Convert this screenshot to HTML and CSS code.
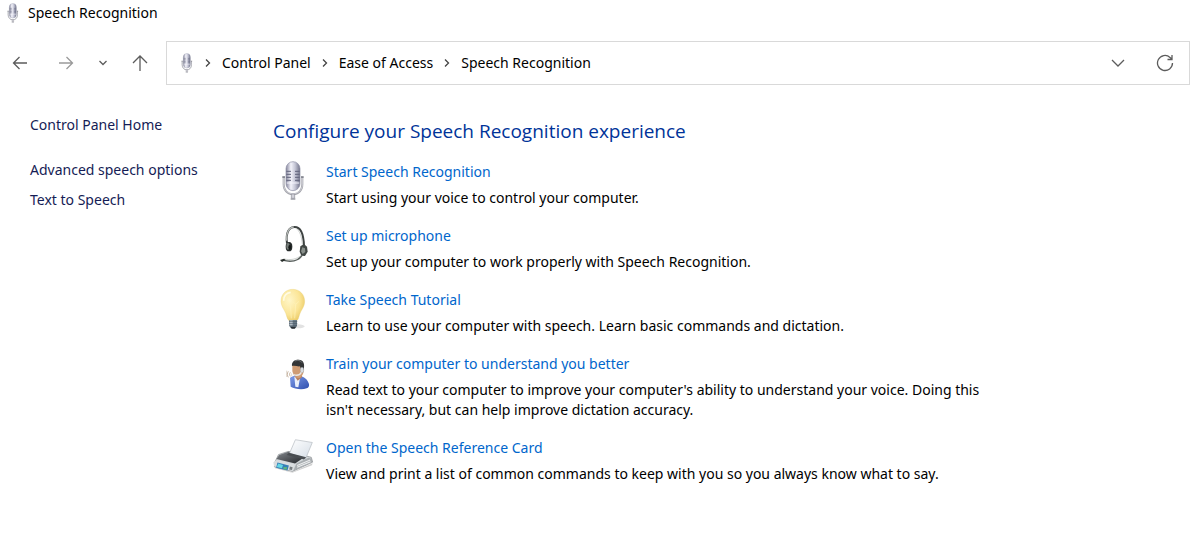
FILE: index.html
```
<!DOCTYPE html>
<html lang="en">
<head>
   <meta charset="UTF-8">
   <title>Speech Recognition</title>
   <link rel="stylesheet" href="styles.css">
</head>

<body>

<!-- shared icon shapes -->
<svg class="defs" width="0" height="0" aria-hidden="true">
   <defs>
      <linearGradient id="metal" x1="0" x2="1" y1="0" y2="0">
         <stop offset="0" stop-color="#85859c"/>
         <stop offset=".35" stop-color="#f4f4fb"/>
         <stop offset=".65" stop-color="#c5c6d6"/>
         <stop offset="1" stop-color="#717389"/>
      </linearGradient>
      <radialGradient id="glow" cx=".35" cy=".35" r=".75">
         <stop offset="0" stop-color="#fff6c9"/>
         <stop offset=".6" stop-color="#fbe596"/>
         <stop offset="1" stop-color="#e9c760"/>
      </radialGradient>
      <linearGradient id="paper" x1="0" x2="1" y1="0" y2="1">
         <stop offset="0" stop-color="#fff"/>
         <stop offset="1" stop-color="#d5dde6"/>
      </linearGradient>
      <linearGradient id="tray" x1="0" x2="1" y1="0" y2="1">
         <stop offset="0" stop-color="#85898e"/>
         <stop offset="1" stop-color="#202327"/>
      </linearGradient>
      <linearGradient id="shirt" x1="0" x2="1" y1="0" y2="1">
         <stop offset="0" stop-color="#7d9be8"/>
         <stop offset="1" stop-color="#2f4fae"/>
      </linearGradient>
   </defs>
   <symbol id="mic" viewBox="34 17 72 120">
      <path d="M41 66v22c0 18 12 30 28 30s28-12 28-30V66" fill="none" stroke="#a2a3aa" stroke-width="6"/>
      <path d="M41 68v20c0 17 12 28 28 28s28-11 28-28V68" fill="none" stroke="#e2e2e8" stroke-width="2"/>
      <path d="M37 66h8M93 66h8" stroke="#777984" stroke-width="4"/>
      <path d="M64 117h10v13H64z" fill="#d2d2da" stroke="#8b8c96" stroke-width="2"/>
      <path d="M62 132h14" stroke="#9b9ca5" stroke-width="4"/>
      <rect x="48" y="20" width="42" height="87" rx="21" fill="url(#metal)" stroke="#8d8ea4" stroke-width="2"/>
      <path d="M49 49h14M75 49h14M49 58h14M75 58h14M49 67h14M75 67h14M49 76h14M75 76h14" stroke="#62647c" stroke-width="3"/>
      <path d="M50 84h38" stroke="#f7f7ff" stroke-width="3"/>
   </symbol>
</svg>

<header class="titlebar">
   <svg class="icon-mic-small" aria-hidden="true"><use href="#mic"/></svg>
   <span>Speech Recognition</span>
</header>

<nav class="toolbar">
   <div class="nav-buttons">
      <button type="button" class="back" aria-label="Back">
         <svg width="16" height="16" viewBox="0 0 16 16"><path d="M15 8H1.500M7.500 2L1.500 8l6 6"/></svg>
      </button>
      <button type="button" class="dim" aria-label="Forward">
         <svg width="16" height="16" viewBox="0 0 16 16"><path d="M1 8h13.500M8.500 2l6 6-6 6"/></svg>
      </button>
      <button type="button" class="recent" aria-label="Recent locations">
         <svg width="8" height="8" viewBox="0 0 8 8"><path d="M.5 2L4 5.500 7.500 2"/></svg>
      </button>
      <button type="button" aria-label="Up">
         <svg width="16" height="16" viewBox="0 0 16 16"><path d="M8 16V1M1 8l7-7 7 7"/></svg>
      </button>
   </div>

   <div class="address">
      <svg class="icon-mic-small" aria-hidden="true"><use href="#mic"/></svg>
      <svg class="sep" viewBox="0 0 6 8"><path d="M1 .5L4.500 4 1 7.500"/></svg>
      <a href="#">Control Panel</a>
      <svg class="sep" viewBox="0 0 6 8"><path d="M1 .5L4.500 4 1 7.500"/></svg>
      <a href="#">Ease of Access</a>
      <svg class="sep" viewBox="0 0 6 8"><path d="M1 .5L4.500 4 1 7.500"/></svg>
      <a href="#">Speech Recognition</a>
      <div class="address-buttons">
         <button type="button" aria-label="Previous locations">
            <svg width="14" height="8" viewBox="0 0 14 8"><path d="M1 1l6 6 6-6"/></svg>
         </button>
         <button type="button" aria-label="Refresh">
            <svg width="18" height="18" viewBox="0 0 18 18"><path d="M16.500 9A7.500 7.500 0 1 1 14 3.400L15.800 5M16 1v4.500h-4.500"/></svg>
         </button>
      </div>
   </div>
</nav>

<div class="page">
   <aside class="sidebar">
      <a class="home" href="#">Control Panel Home</a>
      <a href="#">Advanced speech options</a>
      <a href="#">Text to Speech</a>
   </aside>

   <main class="content">
      <h1>Configure your Speech Recognition experience</h1>

      <ul class="tasks">
         <li>
            <svg class="icon" viewBox="9 21 120 120" aria-hidden="true"><use href="#mic" x="34" y="17" width="72" height="120"/></svg>
            <div class="task">
               <a href="#">Start Speech Recognition</a>
               <p>Start using your voice to control your computer.</p>
            </div>
         </li>
         <li>
            <svg class="icon" viewBox="9 18 120 120" aria-hidden="true">
               <path d="M51 70C47 39 56 21 74 21c17 0 27 21 28 58" fill="none" stroke="#3e4342" stroke-width="6"/>
               <path d="M50 62C48 39 56 23 71 21" fill="none" stroke="#b9bdbb" stroke-width="4"/>
               <path d="M78 25c11 7 17 24 19 48" fill="none" stroke="#b5b9b7" stroke-width="2"/>
               <ellipse cx="57" cy="80" rx="10" ry="14" fill="#262b2a"/>
               <ellipse cx="54" cy="79" rx="5" ry="10" fill="#747b77"/>
               <ellipse cx="59" cy="82" rx="4" ry="7" fill="#151918"/>
               <path d="M91 79l11-7 9 8 2 15-8 13-11-1-5-12z" fill="#414744"/>
               <path d="M97 82l8 3 1 11-8 6-5-8z" fill="#89908b"/>
               <path d="M96 106c-11 17-34 21-58 14" fill="none" stroke="#59605d" stroke-width="5"/>
               <path d="M92 107c-12 11-31 14-50 10" fill="none" stroke="#b4b9b5" stroke-width="2"/>
               <path d="M30 120l12-4 5 4-11 6z" fill="#292e2b"/>
            </svg>
            <div class="task">
               <a href="#">Set up microphone</a>
               <p>Set up your computer to work properly with Speech Recognition.</p>
            </div>
         </li>
         <li>
            <svg class="icon" viewBox="9 21 120 120" aria-hidden="true">
               <ellipse cx="84" cy="130" rx="20" ry="6" fill="#e2e2e2"/>
               <path d="M68 19c-21 0-35 15-35 36 0 15 9 23 14 35 3 8 5 21 11 23h22c6-2 7-16 11-24 5-11 13-19 13-34 0-21-15-36-36-36z" fill="url(#glow)" stroke="#e8cd77" stroke-width="1"/>
               <path d="M41 53c0-13 8-23 21-25" fill="none" stroke="#fffbe5" stroke-width="5"/>
               <path d="M51 55l10 9 8-8 8 8 10-9M61 64l3 42M77 64l-3 42" fill="none" stroke="#fff3b9" stroke-width="2"/>
               <path d="M58 111h23v18l-5 7H63l-5-7z" fill="#6c7d89"/>
               <path d="M60 112h8v17h-8z" fill="#bdc8d0"/>
               <path d="M57 116h25M57 122h25M58 128h23" stroke="#46535f" stroke-width="2"/>
               <path d="M61 131h17l-4 6h-9z" fill="#272d32"/>
            </svg>
            <div class="task">
               <a href="#">Take Speech Tutorial</a>
               <p>Learn to use your computer with speech. Learn basic commands and dictation.</p>
            </div>
         </li>
         <li>
            <svg class="icon" viewBox="9 12 120 120" aria-hidden="true">
               <path d="M60 84c6-6 14-7 23-5 15-3 30 7 34 23 1 6-1 11-7 13-15 5-36 2-48-5z" fill="url(#shirt)"/>
               <path d="M73 80l10 4 8-6-6 34-9-2z" fill="#e9f0fb"/>
               <path d="M80 73h16v9L83 92l-7-10z" fill="#b98160"/>
               <path d="M67 45c2-12 31-12 34 1v19c-3 12-10 19-17 19-9 0-15-12-17-21z" fill="#cf9c74"/>
               <path d="M66 48c-2-14 10-20 20-19 14 0 19 12 15 30l-7 4-4-14c-8 1-15-3-24-1z" fill="#333536"/>
               <path d="M76 33c7-4 15-2 20 5" fill="none" stroke="#73777a" stroke-width="3"/>
               <rect x="91" y="52" width="10" height="16" rx="5" fill="#d8dce0" stroke="#91979d"/>
               <path d="M94 67c-5 9-14 10-23 7" fill="none" stroke="#e7e7e7" stroke-width="4"/>
               <path d="M61 67c-3 4-3 8 0 12M55 64c-4 6-4 12 0 18" fill="none" stroke="#a98d70" stroke-width="2"/>
               <path d="M50 62v19M65 70v8" stroke="#d0c5b8" stroke-width="2"/>
            </svg>
            <div class="task">
               <a href="#">Train your computer to understand you better</a>
               <p>Read text to your computer to improve your computer's ability to understand your voice. Doing this isn't necessary, but can help improve dictation accuracy.</p>
            </div>
         </li>
         <li>
            <svg class="icon" viewBox="12 10 116 116" aria-hidden="true">
               <path d="M15 92l52 17 60-26-2 6-57 22-50-13z" fill="#d0d0d0"/>
               <path d="M28 58l28-9 67 17 4 14-59 27-52-14 2-14z" fill="#d3d7da" stroke="#868b8e" stroke-width="2"/>
               <path d="M30 59l28-10 49 14-31 21-54-13z" fill="url(#tray)"/>
               <path d="M77 15l49 8-19 46-47-15z" fill="url(#paper)" stroke="#b4bbc1" stroke-width="2"/>
               <path d="M58 53l50 13-6 6-50-13z" fill="#4a4e52"/>
               <path d="M80 84l35-17 10 3v11l-54 24z" fill="#a8adb0"/>
               <path d="M82 90l38-16M82 95l39-16" stroke="#eceeef" stroke-width="3"/>
               <path d="M13 80l10-6 52 13-6 19-54-14z" fill="#d9dddf"/>
               <path d="M25 81l33 9-4 14-33-8z" fill="#347eb7"/>
               <path d="M27 84l14 4-3 10-15-4z" fill="#65d7e4"/>
               <path d="M43 94l10 1-2 7-9-2z" fill="#60b779"/>
               <path d="M61 93l8 2-2 8-8-2z" fill="#777d80"/>
            </svg>
            <div class="task">
               <a href="#">Open the Speech Reference Card</a>
               <p>View and print a list of common commands to keep with you so you always know what to say.</p>
            </div>
         </li>
      </ul>
   </main>
</div>

</body>
</html>
```

FILE: styles.css
```
* {
   box-sizing: border-box;
}

body {
   margin: 0;
   background: #fff;
   color: #000;
   font-family: "Segoe UI", "Noto Sans", sans-serif;
   font-size: 14px;
   line-height: 20px;
}

a {
   color: inherit;
   text-decoration: none;
}

a:hover {
   text-decoration: underline;
}

button {
   display: flex;
   align-items: center;
   justify-content: center;
   width: 20px;
   height: 24px;
   padding: 0;
   border: 0;
   background: none;
   color: #5c5c5c;
}

button path, .sep path {
   fill: none;
   stroke: currentColor;
   stroke-width: 1.3;
}

.defs {
   display: block;
}

.titlebar {
   display: flex;
   align-items: center;
   gap: 8px;
   padding: 3px 6px 1px;
}

.icon-mic-small {
   flex: none;
   width: 14px;
   height: 20px;
}

/* navigation row */

.toolbar {
   display: flex;
   align-items: center;
   padding: 17px 9px 0 10px;
}

.nav-buttons {
   display: flex;
   flex: none;
   gap: 22px;
   width: 156px;
}

.nav-buttons .back {
   margin-right: 4px;
}

.nav-buttons .recent {
   width: 10px;
}

.nav-buttons .dim {
   color: #9a9a9a;
}

.address {
   display: flex;
   flex: 1;
   align-items: center;
   gap: 11px;
   height: 44px;
   padding: 0 14px 0 13px;
   border: 1px solid #d9d9d9;
}

.sep {
   flex: none;
   width: 6px;
   height: 8px;
   color: #444;
}

.address-buttons {
   display: flex;
   gap: 27px;
   margin-left: auto;
}

/* page */

.page {
   display: flex;
   padding: 30px;
}

.sidebar {
   display: flex;
   flex: none;
   flex-direction: column;
   gap: 10px;
   width: 243px;
   color: #151c55;
}

.sidebar .home {
   margin-bottom: 15px;
}

.content {
   flex: 1;
}

h1 {
   margin: 2px 0 17px;
   color: #003399;
   font-family: "Segoe UI", "Open Sans", sans-serif;
   font-size: 19px;
   font-weight: normal;
   line-height: 28px;
}

.tasks {
   display: flex;
   flex-direction: column;
   gap: 18px;
   margin: 0;
   padding: 0;
   list-style: none;
}

.tasks li {
   display: flex;
   gap: 13px;
}

.icon {
   flex: none;
   width: 40px;
   height: 40px;
   overflow: visible;
}

.task {
   max-width: 680px;
}

.task a {
   color: #0066cc;
}

.task p {
   margin: 6px 0 0;
}
```
